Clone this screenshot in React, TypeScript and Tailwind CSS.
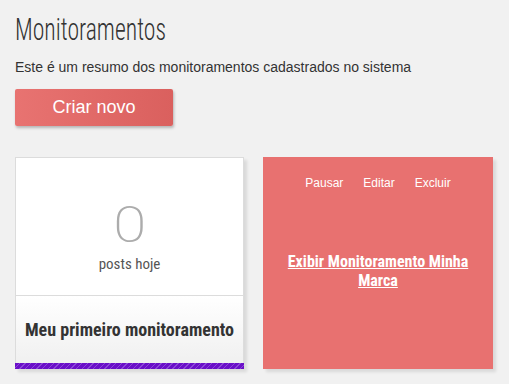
export default function App() {
  return (
    <div className="min-h-screen bg-[#f1f1f1] px-[15px] pt-[11px] font-['Liberation_Sans',Arial,sans-serif] text-[#333]">
      <h1 className="h-[36px] font-['Roboto_Condensed',Roboto,sans-serif] text-[32px] font-light leading-[36px] text-[#333]">
        <span className="inline-block origin-left scale-x-[0.74]">Monitoramentos</span>
      </h1>
      <p className="mt-[11px] text-[14px] leading-[18px] text-[#333]">
        Este é um resumo dos monitoramentos cadastrados no sistema
      </p>
      <button className="mt-[13px] flex h-[37px] w-[158px] items-center justify-center rounded-[2px] bg-gradient-to-r from-[#e87371] to-[#da605e] text-[18px] text-white shadow-[1px_2px_3px_rgba(0,0,0,0.25)]">
        Criar novo
      </button>

      <div className="mt-[31px] flex gap-[19px]">
        <div className="flex h-[212px] w-[229px] flex-col border-x border-t border-[#dcdcdc] bg-white shadow-[3px_3px_3px_rgba(0,0,0,0.1)]">
          <div className="flex h-[137px] flex-col items-center pt-[42px]">
            <span className="inline-block scale-x-[1.2] font-['Roboto',sans-serif] text-[50px] font-extralight leading-[50px] text-[#acacac]">
              0
            </span>
            <span className="mt-[5px] font-['Roboto_Condensed',sans-serif] text-[15px] leading-[18px] text-[#555]">
              posts hoje
            </span>
          </div>
          <div className="flex flex-1 items-center justify-center border-t border-[#dcdcdc] bg-gradient-to-b from-white to-[#f0f0f0]">
            <span className="font-['Roboto_Condensed',sans-serif] text-[18px] font-bold text-[#333]">
              Meu primeiro monitoramento
            </span>
          </div>
          <div className="-mx-px h-[6px] bg-[#6a0fc8] bg-[repeating-linear-gradient(135deg,#6a0fc8_0px,#6a0fc8_3px,#8b45d8_3px,#8b45d8_4px)]" />
        </div>

        <div className="flex h-[212px] w-[230px] flex-col items-center bg-[#e87170] px-[20px] shadow-[3px_3px_3px_rgba(0,0,0,0.1)]">
          <div className="mt-[18px] flex gap-[20px] text-[12px] leading-[16px] text-white">
            <a href="#">Pausar</a>
            <a href="#">Editar</a>
            <a href="#">Excluir</a>
          </div>
          <a
            href="#"
            className="mt-[61px] text-center font-['Roboto_Condensed',sans-serif] text-[16px] font-bold leading-[19px] text-white underline"
          >
            Exibir Monitoramento Minha Marca
          </a>
        </div>
      </div>
    </div>
  );
}
